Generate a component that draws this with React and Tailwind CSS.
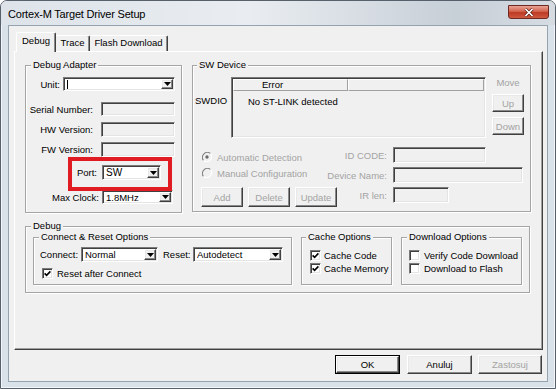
import React from "react";

const sunken =
  "border border-t-[#7a7a7a] border-l-[#7a7a7a] border-b-white border-r-white shadow-[inset_1px_1px_0_#404040,inset_-1px_-1px_0_#e4e4e4]";
const raised =
  "border border-t-white border-l-white border-b-[#404040] border-r-[#404040] shadow-[inset_-1px_-1px_0_#8a8a8a,inset_1px_1px_0_#e8e8e8]";

function Arrow() {
  return (
    <svg width="7" height="4" viewBox="0 0 7 4">
      <path d="M0 0h7L3.5 4z" fill="#000" />
    </svg>
  );
}

function Combo({ className, value }) {
  return (
    <div className={`flex items-stretch bg-white p-[1px] shrink-0 ${sunken} ${className}`}>
      <div className="flex-1 flex items-center pl-[2px] whitespace-nowrap overflow-hidden">{value}</div>
      <div className={`w-[12px] flex items-center justify-center bg-[#f0f0f0] ${raised}`}>
        <Arrow />
      </div>
    </div>
  );
}

function TextBox({ className }) {
  return <div className={`bg-[#f0f0f0] shrink-0 ${sunken} ${className}`} />;
}

function Btn({ className, children, disabled }) {
  return (
    <div
      className={`flex items-center justify-center shrink-0 bg-[#f0f0f0] ${raised} ${
        disabled ? "text-[#a3a3a3]" : "text-black"
      } ${className}`}
    >
      {children}
    </div>
  );
}

function Check({ checked }) {
  return (
    <div className={`w-[11px] h-[11px] shrink-0 bg-white flex items-center justify-center ${sunken}`}>
      {checked && (
        <svg width="7" height="7" viewBox="0 0 7 7">
          <path d="M0.6 3.4 L2.6 5.4 L6.4 1.4" stroke="#000" strokeWidth="1.6" fill="none" />
        </svg>
      )}
    </div>
  );
}

function Radio({ sel }) {
  return (
    <svg width="10" height="10" viewBox="0 0 12 12" className="shrink-0">
      <path d="M10.2 1.8 A6 6 0 0 0 1.8 10.2" stroke="#808080" strokeWidth="1.3" fill="none" />
      <path d="M1.8 10.2 A6 6 0 0 0 10.2 1.8" stroke="#ffffff" strokeWidth="1.3" fill="none" />
      {sel && <circle cx="6" cy="6" r="2" fill="#6a6a6a" />}
    </svg>
  );
}

function Group({ title, className, children, legendClass = "left-[5px]" }) {
  return (
    <div
      className={`relative shrink-0 border border-[#a5a5a5] shadow-[inset_1px_1px_0_#fff,1px_1px_0_#fff] ${className}`}
    >
      <span
        className={`absolute -top-[7px] ${legendClass} px-[2px] bg-[#f0f0f0] leading-[11px] whitespace-nowrap`}
      >
        {title}
      </span>
      {children}
    </div>
  );
}

export default function App() {
  return (
    <div className="w-[556px] h-[389px] font-['Liberation_Sans',Arial,sans-serif] text-[9.5px] leading-[11px] text-black bg-[#d9e1e9] border border-[#56616c] rounded-t-[7px] flex flex-col overflow-hidden shadow-[inset_0_0_0_1px_rgba(255,255,255,0.7)]">
      {/* Title bar */}
      <div className="h-[24px] shrink-0 flex items-start bg-[linear-gradient(90deg,#dde3e9_0%,#e9edf1_45%,#c7cfd7_82%,#d6dce2_100%)]">
        <span className="ml-[7px] mt-[7px] text-[11px] leading-[13px] tracking-[-0.2px] text-black">
          Cortex-M Target Driver Setup
        </span>
        <div className="ml-auto mr-[6px] mt-[4px] w-[41px] h-[14px] rounded-b-[3px] border border-[#6e2a22] bg-[linear-gradient(180deg,#e9a395_0%,#d3644f_45%,#bd3a24_55%,#cf5a3f_100%)] flex items-center justify-center">
          <svg width="10" height="9" viewBox="0 0 10 9">
            <path d="M1.5 1 L8.5 8 M8.5 1 L1.5 8" stroke="#5a1a12" strokeWidth="3" />
            <path d="M1.5 1 L8.5 8 M8.5 1 L1.5 8" stroke="#ffffff" strokeWidth="1.7" />
          </svg>
        </div>
      </div>

      {/* Client area */}
      <div className="mx-[7px] h-[357px] shrink-0 border border-[#95a2af] bg-[#f0f0f0] flex flex-col">
        {/* Tabs */}
        <div className="flex items-end ml-[7px] mt-[6px] h-[20px] -mb-[1px] relative z-10">
          <div className="h-[20px] w-[40px] border-t border-l border-t-white border-l-white border-r border-r-[#404040] shadow-[inset_-1px_0_0_#8a8a8a] bg-[#f0f0f0] rounded-t-[2px] flex justify-center pt-[2px]">
            Debug
          </div>
          <div className="h-[16px] mb-[1px] w-[34px] border-t border-t-white border-r border-r-[#404040] shadow-[inset_-1px_0_0_#8a8a8a] rounded-tr-[2px] flex justify-center pt-[1px]">
            Trace
          </div>
          <div className="h-[16px] mb-[1px] w-[78px] border-t border-t-white border-r border-r-[#404040] shadow-[inset_-1px_0_0_#8a8a8a] rounded-tr-[2px] flex justify-center pt-[1px]">
            Flash Download
          </div>
        </div>

        {/* Tab panel */}
        <div className="ml-[5px] w-[529px] h-[299px] shrink-0 border border-t-white border-l-white border-r-[#404040] border-b-[#404040] shadow-[inset_-1px_-1px_0_#a0a0a0] bg-[#f0f0f0] flex flex-col">
          <div className="flex mt-[13px] ml-[10px]">
            {/* Debug Adapter */}
            <Group title="Debug Adapter" className="w-[157px] h-[148px]">
              <div className="flex items-center mt-[11px] h-[14px]">
                <span className="w-[34px] text-right">Unit:</span>
                <Combo
                  className="ml-[3px] w-[112px] h-[14px]"
                  value={<span className="w-px h-[9px] bg-black" />}
                />
              </div>
              <div className="flex items-center mt-[11px] h-[14px]">
                <span className="w-[67px] text-right whitespace-nowrap">Serial Number:</span>
                <TextBox className="ml-[8px] w-[74px] h-[14px]" />
              </div>
              <div className="flex items-center mt-[6px] h-[15px]">
                <span className="w-[67px] text-right whitespace-nowrap">HW Version:</span>
                <TextBox className="ml-[8px] w-[74px] h-[15px]" />
              </div>
              <div className="flex items-center mt-[5px] h-[15px]">
                <span className="w-[67px] text-right whitespace-nowrap">FW Version:</span>
                <TextBox className="ml-[8px] w-[74px] h-[15px]" />
              </div>
              <div className="flex items-center mt-[8px] h-[15px]">
                <span className="w-[71px] text-right">Port:</span>
                <Combo className="ml-[5px] w-[59px] h-[15px]" value={<span className="text-[10px]">SW</span>} />
              </div>
              <div className="flex items-center mt-[10px] h-[14px]">
                <span className="w-[73px] text-right whitespace-nowrap">Max Clock:</span>
                <Combo className="ml-[3px] w-[71px] h-[14px]" value="1.8MHz" />
              </div>
              <div className="absolute left-[42px] top-[91px] w-[104px] h-[34px] border-[4px] border-[#e01b22]" />
            </Group>

            {/* SW Device */}
            <Group title="SW Device" className="ml-[10px] w-[339px] h-[147px]" legendClass="left-[4px]">
              <div className="flex mt-[11px]">
                <span className="ml-[2px] w-[36px] mt-[18px] shrink-0">SWDIO</span>
                <div className={`w-[255px] h-[61px] shrink-0 p-[1px] bg-[#f0f0f0] ${sunken}`}>
                  <div className="flex h-[12px]">
                    <div className="w-[115px] border border-t-white border-l-white border-b-[#a0a0a0] border-r-[#a0a0a0] pl-[28px] leading-[10px]">
                      Error
                    </div>
                    <div className="flex-1 border border-t-white border-l-white border-b-[#a0a0a0] border-r-[#a0a0a0]" />
                  </div>
                  <div className="pl-[15px] mt-[5px]">No ST-LINK detected</div>
                </div>
                <div className="ml-[6px] w-[32px] flex flex-col items-center shrink-0">
                  <span className="text-[#a3a3a3]">Move</span>
                  <Btn className="mt-[6px] w-[32px] h-[18px]" disabled>
                    Up
                  </Btn>
                  <Btn className="mt-[5px] w-[32px] h-[18px]" disabled>
                    Down
                  </Btn>
                </div>
              </div>

              <div className="flex mt-[9px]">
                <div className="ml-[8px] w-[120px] shrink-0 flex flex-col">
                  <div className="flex items-center h-[16px] mt-[2px] text-[#a3a3a3] whitespace-nowrap">
                    <span className="ml-[1px] flex">
                      <Radio sel />
                    </span>
                    <span className="ml-[5px]">Automatic Detection</span>
                  </div>
                  <div className="flex items-center h-[16px] text-[#a3a3a3] whitespace-nowrap">
                    <span className="ml-[1px] flex">
                      <Radio />
                    </span>
                    <span className="ml-[5px]">Manual Configuration</span>
                  </div>
                  <div className="flex mt-[6px]">
                    <Btn className="w-[42px] h-[20px]" disabled>
                      Add
                    </Btn>
                    <Btn className="ml-[5px] w-[42px] h-[20px]" disabled>
                      Delete
                    </Btn>
                    <Btn className="ml-[5px] w-[42px] h-[20px]" disabled>
                      Update
                    </Btn>
                  </div>
                </div>
                <div className="flex flex-col">
                  <div className="flex items-center h-[16px]">
                    <span className="w-[66px] text-right text-[#a3a3a3] whitespace-nowrap">ID CODE:</span>
                    <TextBox className="ml-[6px] w-[93px] h-[16px]" />
                  </div>
                  <div className="flex items-center h-[16px] mt-[4px]">
                    <span className="w-[66px] text-right text-[#a3a3a3] whitespace-nowrap">Device Name:</span>
                    <TextBox className="ml-[6px] w-[130px] h-[16px]" />
                  </div>
                  <div className="flex items-center h-[16px] mt-[4px]">
                    <span className="w-[66px] text-right text-[#a3a3a3] whitespace-nowrap">IR len:</span>
                    <TextBox className="ml-[6px] w-[56px] h-[16px]" />
                  </div>
                </div>
              </div>
            </Group>
          </div>

          {/* Debug */}
          <Group title="Debug" className="mt-[13px] ml-[10px] w-[505px] h-[67px]">
            <div className="flex mt-[10px] ml-[7px]">
              <Group title="Connect & Reset Options" className="w-[259px] h-[48px]">
                <div className="flex items-center mt-[9px] ml-[6px] h-[15px]">
                  <span className="w-[38px] whitespace-nowrap">Connect:</span>
                  <Combo className="ml-[3px] w-[77px] h-[15px]" value="Normal" />
                  <span className="ml-[5px] w-[27px]">Reset:</span>
                  <Combo className="ml-[3px] w-[90px] h-[15px]" value="Autodetect" />
                </div>
                <div className="flex items-center mt-[5px] ml-[8px] h-[12px]">
                  <Check checked />
                  <span className="ml-[4px]">Reset after Connect</span>
                </div>
              </Group>
              <Group title="Cache Options" className="ml-[9px] w-[91px] h-[48px]" legendClass="left-[4px]">
                <div className="flex flex-col mt-[11px] ml-[8px]">
                  <div className="flex items-center h-[13px]">
                    <Check checked />
                    <span className="ml-[3px]">Cache Code</span>
                  </div>
                  <div className="flex items-center h-[13px]">
                    <Check checked />
                    <span className="ml-[3px]">Cache Memory</span>
                  </div>
                </div>
              </Group>
              <Group title="Download Options" className="ml-[9px] w-[121px] h-[48px]">
                <div className="flex flex-col mt-[11px] ml-[7px]">
                  <div className="flex items-center h-[13px] whitespace-nowrap">
                    <Check />
                    <span className="ml-[4px]">Verify Code Download</span>
                  </div>
                  <div className="flex items-center h-[13px] whitespace-nowrap">
                    <Check />
                    <span className="ml-[4px]">Download to Flash</span>
                  </div>
                </div>
              </Group>
            </div>
          </Group>
        </div>

        {/* Bottom buttons */}
        <div className="flex justify-end mt-[5px] mr-[5px]">
          <div className="w-[65px] h-[19px] border border-black flex">
            <Btn className="flex-1">OK</Btn>
          </div>
          <Btn className="ml-[7px] w-[65px] h-[19px]">Anuluj</Btn>
          <Btn className="ml-[6px] w-[64px] h-[19px]" disabled>
            Zastosuj
          </Btn>
        </div>
      </div>
    </div>
  );
}
